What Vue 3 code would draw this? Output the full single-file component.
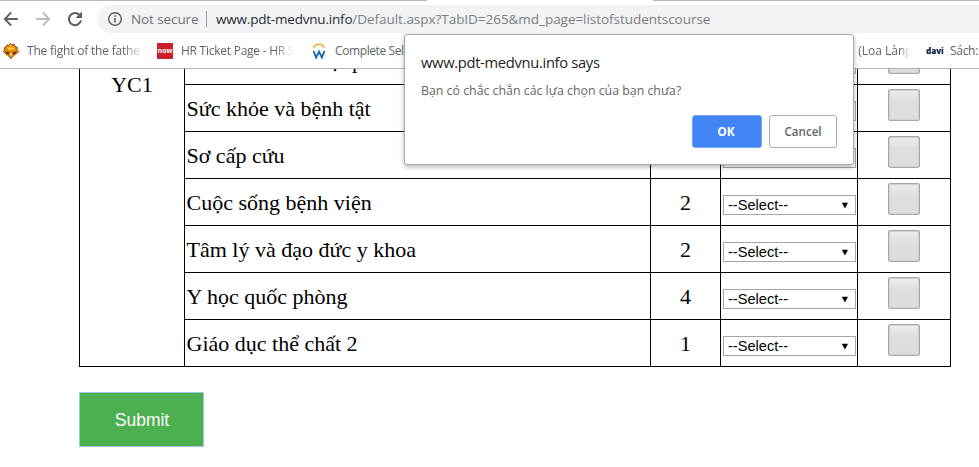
<script setup>
const rows = [
  { name: 'Văn hóa và xã hội phát triển', credits: '' },
  { name: 'Sức khỏe và bệnh tật', credits: '' },
  { name: 'Sơ cấp cứu', credits: '' },
  { name: 'Cuộc sống bệnh viện', credits: '2' },
  { name: 'Tâm lý và đạo đức y khoa', credits: '2' },
  { name: 'Y học quốc phòng', credits: '4' },
  { name: 'Giáo dục thể chất 2', credits: '1' },
]
</script>

<template>
  <div class="window">
    <header class="chrome">
      <div class="tab-edge"><i class="edge-left"></i><i class="edge-right"></i></div>
      <div class="toolbar">
        <svg class="nav" width="97" height="28" viewBox="0 0 97 28" fill="none" stroke-width="1.9">
          <path d="M17.8 14H5.2M11.2 7.4L4.8 14L11.2 20.6" stroke="#5a5e62" />
          <path d="M36 14H48.8M42.8 7.4L49.2 14L42.8 20.6" stroke="#b9bbbd" />
          <path d="M79.4 9.8A6.1 6.1 0 1 0 81 15.4" stroke="#5a5e62" stroke-width="2" />
          <path d="M82 6.6V13H75.6Z" fill="#5a5e62" />
        </svg>
        <div class="omnibox">
          <svg class="info" width="16" height="16" viewBox="0 0 16 16">
            <circle cx="8" cy="8" r="6.3" fill="none" stroke="#5f6368" stroke-width="1.5" />
            <path d="M7.2 7H8.8V11.6H7.2ZM7.2 4.3H8.8V5.9H7.2Z" fill="#5f6368" />
          </svg>
          <span class="secure">Not secure</span>
          <span class="bar"></span>
          <span class="host">www.pdt-medvnu.info</span><span class="path">/Default.aspx?TabID=265&amp;md_page=listofstudentscourse</span>
        </div>
      </div>
      <nav class="bookmarks">
        <div class="mark first">
          <svg width="16" height="16" viewBox="0 0 16 16">
            <path d="M1 5L3 3.8L4 1.8L5.6 2.4L7.5 .4L9.2 2L11.4 1.2L12 3.5L14.6 4.6L14 6.4L15.8 8.6L13 11L10.6 12.4L7.8 15.8L5.4 12.6L2.6 11L.3 8.4L1.8 6.8Z" fill="#ed850b" stroke="#6d3609" stroke-width=".8" />
            <path d="M4 3.5L6 5L7.5 2L9.5 5L12 4L10.5 7H5Z" fill="#ffc533" />
            <path d="M2.2 8.3L6.5 9.5L6 11.5L3.4 10.3ZM13.8 8.3L9.5 9.5L10 11.5L12.6 10.3Z" fill="#542b12" />
            <path d="M6.8 10H9.2L8 14.5Z" fill="#ffe04a" />
          </svg>
          <span class="fade t1">The fight of the fathe</span>
        </div>
        <div class="mark second">
          <b class="now">now</b>
          <span class="fade t2">HR Ticket Page - HR S</span>
        </div>
        <div class="mark third">
          <svg width="14" height="16" viewBox="0 0 14 16" fill="none">
            <path d="M1.8 4.8C3.4-.1 10.6-.1 12.2 4.8" stroke="#f2a62b" stroke-width="1.5" />
            <path d="M1.6 8L4.1 14.6L7 8.6L9.9 14.6L12.4 8" stroke="#1769ae" stroke-width="1.9" />
          </svg>
          <span class="t3">Complete Sel</span>
        </div>
        <div class="mark fourth"><span class="fade t4">l (Loa Làng</span></div>
        <div class="mark fifth"><b class="davi">davi</b><span class="t5">Sách:</span></div>
      </nav>
    </header>

    <main class="page">
      <div class="courses">
        <div class="term">YC1</div>
        <div class="rows">
          <div v-for="row in rows" :key="row.name" class="row">
            <div class="name">{{ row.name }}</div>
            <div class="credits">{{ row.credits }}</div>
            <div class="choice"><div class="select"><span v-if="row.credits">--Select--</span><svg v-if="row.credits" width="8" height="7" viewBox="0 0 8 7"><path d="M.8 .7H7L3.9 6.4Z" /></svg></div></div>
            <div class="check"><div class="box"></div></div>
          </div>
        </div>
      </div>
      <button class="submit">Submit</button>
    </main>

    <div class="dialog">
      <div class="title">www.pdt-medvnu.info says</div>
      <div class="message">Bạn có chắc chắn các lựa chọn của bạn chưa?</div>
      <div class="actions"><button class="ok">OK</button><button class="cancel">Cancel</button></div>
    </div>
  </div>
</template>

<style>
body { margin: 0; background: #fff; }
</style>

<style scoped>
* { box-sizing: border-box; }
.window { position: relative; width: 979px; height: 467px; overflow: hidden; background: #fff; font-family: "Open Sans", "Noto Sans", sans-serif; white-space: nowrap; }
.chrome { height: 69px; border-bottom: 1px solid #b4b5b7; }
.tab-edge { display: flex; justify-content: space-between; height: 5px; }
.tab-edge i { height: 1px; background: #b8b8b8; }
.edge-left { width: 427px; }
.edge-right { width: 326px; }
.toolbar { display: flex; height: 28px; }
.nav { flex: none; }
.omnibox { display: flex; align-items: center; flex: 1; height: 28px; padding-left: 10px; border-radius: 14px 0 0 14px; background: #f1f3f4; font-size: 13.5px; line-height: 28px; }
.info { flex: none; }
.secure { width: 75px; margin-left: 8px; letter-spacing: -.1px; color: #6c7074; }
.bar { width: 1px; height: 16px; margin-right: 9px; background: #9c9fa3; }
.host { letter-spacing: -.2px; color: #2b2d30; }
.path { letter-spacing: -.04px; color: #7c8084; }
.bookmarks { display: flex; align-items: center; height: 35px; padding-left: 3px; font-size: 12px; color: #606368; }
.mark { display: flex; align-items: center; flex: none; }
.first, .second { width: 154px; gap: 8px; }
.third { width: 541px; gap: 9px; padding-left: 1px; }
.fourth { width: 74px; }
.fifth { gap: 7px; }
.fade { width: 113px; overflow: hidden; mask-image: linear-gradient(90deg, #000 83%, transparent); }
.t1 { letter-spacing: -.2px; }
.first .t1 { width: 116px; }
.t2 { letter-spacing: -.25px; }
.t3 { letter-spacing: -.4px; }
.t5 { letter-spacing: -.3px; }
.fade.t4 { width: 58px; }
.now { width: 16px; height: 16px; background: #cb1f2e; color: #fff; font-size: 7px; line-height: 15px; text-align: center; }
.davi { width: 17px; color: #0b2447; font-size: 8px; font-weight: 800; }
.page { height: 398px; overflow: hidden; padding-left: 79px; }
.courses { display: flex; width: 872px; margin-top: -31px; border-left: 1px solid #000; border-right: 1px solid #000; font-family: "Liberation Serif", serif; font-size: 22px; color: #000; }
.term { width: 104px; padding-top: 34px; border-bottom: 1px solid #000; text-align: center; line-height: 25px; }
.row { display: grid; grid-template-columns: 466px 70px 137px 93px; height: 47px; }
.row > div { height: 47px; border-left: 1px solid #000; border-bottom: 1px solid #000; }
.name { padding-left: 1.5px; line-height: 47px; }
.row:first-child .name { line-height: 45px; }
.credits { text-align: center; line-height: 47px; }
.choice { padding: 16px 0 0 2px; }
.select { display: flex; align-items: center; justify-content: space-between; width: 133px; height: 20px; padding: 0 6px 0 4px; border: 1px solid #a6a6a6; background: #fff; font-family: "Liberation Sans", sans-serif; font-size: 14.6px; line-height: 18px; }
.check { padding: 4px 0 0 30px; }
.box { width: 32px; height: 32px; border: 1px solid #a8a8a8; border-radius: 2px; background: linear-gradient(#ededed, #dedede 38%, #dcdcdc); box-shadow: inset 0 0 0 1px #d0d0d0; }
.submit { display: block; width: 125px; height: 55px; margin-top: 25px; padding: 1px 0 0 1px; border: 1px solid #9cc8e4; border-radius: 1px; background: #4caf50; color: #fff; font-family: "Liberation Sans", sans-serif; font-size: 17.5px; }
.dialog { position: absolute; left: 404px; top: 34px; width: 450px; height: 131px; padding: 18px 16px 0; border: 1px solid #a9a9a9; border-radius: 3px; background: #fff; box-shadow: 0 2px 5px rgba(0, 0, 0, .3); }
.title { height: 20px; font-size: 14.7px; line-height: 18px; letter-spacing: -.3px; color: #222; }
.message { margin-top: 8px; font-size: 12.35px; line-height: 20px; color: #666; }
.actions { display: flex; justify-content: flex-end; gap: 7px; margin-top: 14px; }
.actions button { height: 33px; padding: 0; border-radius: 3px; font-family: inherit; font-size: 12px; }
.actions .ok { width: 70px; padding-right: 2px; border: 1px solid #76a7f8; background: #4285f4; color: #fff; font-weight: 700; }
.actions .cancel { width: 68px; border: 1px solid #adadad; background: #fff; color: #5f6368; font-size: 11.6px; font-weight: 600; }
</style>
